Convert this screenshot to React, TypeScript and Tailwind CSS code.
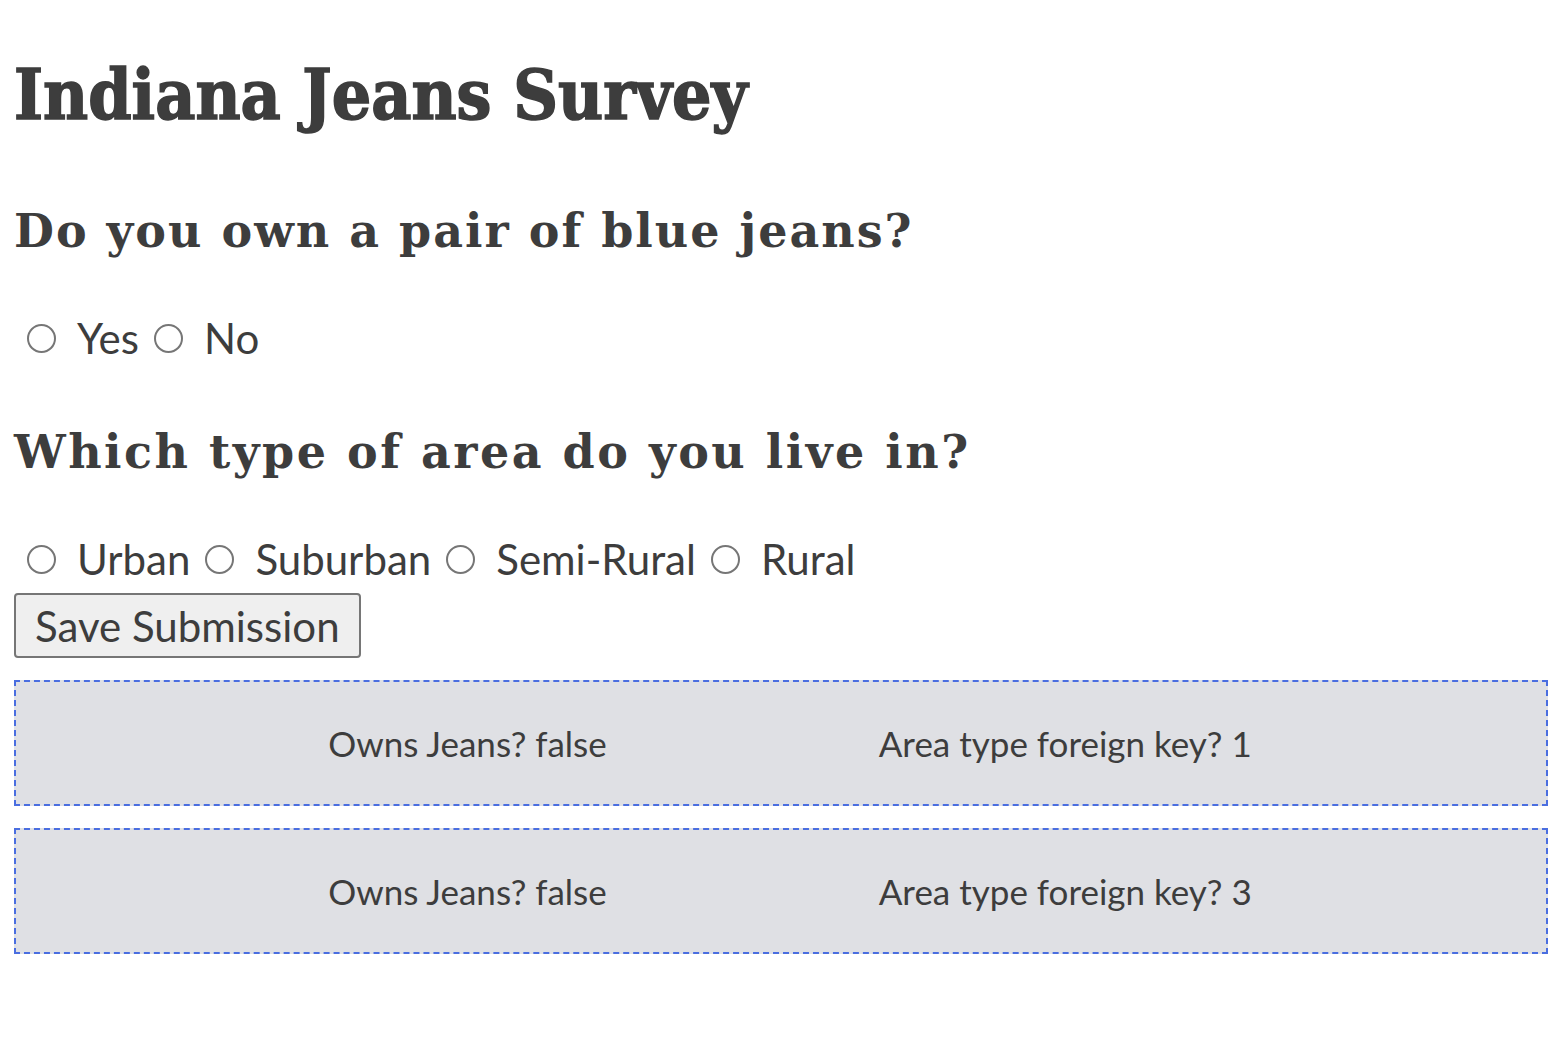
import { useState } from "react";

type Submission = {
    ownsJeans: boolean;
    areaTypeId: number;
};

const areaTypes = ["Urban", "Suburban", "Semi-Rural", "Rural"];

function Radio({ name, label, checked, onChange }: { name: string; label: string; checked: boolean; onChange: () => void }) {
    return (
        <label className="flex items-center">
            <input
                type="radio"
                name={name}
                checked={checked}
                onChange={onChange}
                className="appearance-none w-[29px] h-[29px] rounded-full border-2 border-[#767676] bg-white ml-[15px] mr-[21px] checked:border-[9px] checked:border-[#1a73e8]"
            />
            <span>{label}</span>
        </label>
    );
}

export default function App() {
    const [owns, setOwns] = useState<string>("");
    const [area, setArea] = useState<string>("");
    const [submissions] = useState<Submission[]>([
        { ownsJeans: false, areaTypeId: 1 },
        { ownsJeans: false, areaTypeId: 3 },
    ]);

    return (
        <div className="min-h-screen bg-white pl-[14px] pr-[20px] text-[#3d3d3d] font-['Lato',sans-serif]">
            <h1 className="pt-[60px] h-[208px] text-[69px] leading-none font-bold [-webkit-text-stroke:1.5px_#3d3d3d] font-['DejaVu_Serif_Condensed','DejaVu_Serif',serif]">
                Indiana Jeans Survey
            </h1>

            <h2 className="h-[105px] text-[46px] leading-none font-bold tracking-[2px] font-['DejaVu_Serif',serif]">
                Do you own a pair of blue jeans?
            </h2>
            <div className="h-[50px] flex items-center text-[42px] leading-[50px] -ml-[2px]">
                <Radio name="owns" label="Yes" checked={owns === "yes"} onChange={() => setOwns("yes")} />
                <Radio name="owns" label="No" checked={owns === "no"} onChange={() => setOwns("no")} />
            </div>

            <h2 className="mt-[66px] h-[105px] text-[46px] leading-none font-bold tracking-[2.5px] font-['DejaVu_Serif',serif]">
                Which type of area do you live in?
            </h2>
            <div className="h-[50px] flex items-center text-[42px] leading-[50px] -ml-[2px]">
                {areaTypes.map((t) => (
                    <Radio key={t} name="area" label={t} checked={area === t} onChange={() => setArea(t)} />
                ))}
            </div>

            <button className="mt-[9px] h-[65px] px-[19px] text-[42px] leading-none bg-[#efefef] border-2 border-[#767676] rounded-[4px]">
                Save Submission
            </button>

            <div className="mt-[22px] flex flex-col gap-[22px]">
                {submissions.map((s, i) => (
                    <div key={i} className="h-[126px] pl-[18px] flex items-center justify-center gap-[272px] bg-[#dfe0e4] border-2 border-dashed border-[#4a6ee0] text-[35px]">
                        <div>Owns Jeans? {String(s.ownsJeans)}</div>
                        <div>Area type foreign key? {s.areaTypeId}</div>
                    </div>
                ))}
            </div>
        </div>
    );
}
